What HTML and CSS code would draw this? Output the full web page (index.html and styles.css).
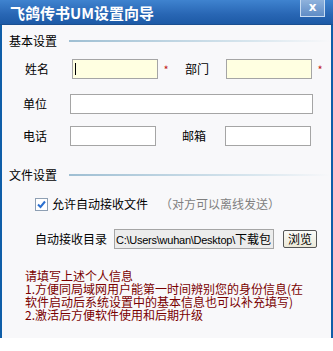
FILE: index.html
```html
<!DOCTYPE html>
<html>
<head>
<meta charset="utf-8">
<link rel="stylesheet" href="styles.css">
</head>
<body>
<div class="window">
  <div class="titlebar">
    <span class="title">飞鸽传书UM设置向导</span>
    <span class="close">x</span>
  </div>
  <div class="body">
    <div class="group-head"><span>基本设置</span><i class="rule"></i></div>
    <div class="row r1">
      <span class="lbl l1">姓名</span>
      <span class="input req w86"><span class="caret"></span></span>
      <span class="star">*</span>
      <span class="lbl l2">部门</span>
      <span class="input req w86"></span>
      <span class="star">*</span>
    </div>
    <div class="row r2">
      <span class="lbl l3">单位</span>
      <span class="input w243"></span>
    </div>
    <div class="row r3">
      <span class="lbl l3">电话</span>
      <span class="input w86"></span>
      <span class="lbl l4">邮箱</span>
      <span class="input w86"></span>
    </div>
    <div class="group-head g2"><span>文件设置</span><i class="rule"></i></div>
    <div class="row r4">
      <span class="check"><svg width="9" height="9" viewBox="0 0 9 9"><path d="M1 4.5 L3.5 7 L8 1.5" fill="none" stroke="#2a6fd0" stroke-width="2"/></svg></span>
      <span class="cklbl">允许自动接收文件</span>
      <span class="hint">（对方可以离线发送）</span>
    </div>
    <div class="row r5">
      <span class="lbl l5">自动接收目录</span>
      <span class="path"><span class="lat">C:\Users\wuhan\Desktop\</span>下载包</span>
      <span class="btn">浏览</span>
    </div>
    <div class="note">
      <div class="ln">请填写上述个人信息</div>
      <div class="ln">1.方便同局域网用户能第一时间辨别您的身份信息(在</div>
      <div class="ln">软件启动后系统设置中的基本信息也可以补充填写)</div>
      <div class="ln">2.激活后方便软件使用和后期升级</div>
    </div>
  </div>
</div>
</body>
</html>
```
FILE: styles.css
```css
html, body { margin: 0; padding: 0; background: #fff; }
body { width: 333px; height: 351px; overflow: hidden; font-family: "Noto Sans CJK SC", "DejaVu Sans", sans-serif; font-size: 12px; color: #000; }
.window { width: 333px; height: 338px; box-sizing: border-box; border-left: 2px solid #0f5ea8; border-right: 2px solid #0f5ea8; background: #f8f8fa; display: flex; flex-direction: column; }
.titlebar { height: 25px; margin: 0 -2px; background: linear-gradient(#3f83cf, #2866b4 60%, #1d5aa6); display: flex; align-items: center; position: relative; border-bottom: 1px solid #1b4f90; box-sizing: border-box; }
.title { color: #fff; font-weight: bold; font-size: 15px; margin-left: 10px; line-height: 1; }
.close { position: absolute; right: 8px; top: 0; width: 25px; height: 17px; background: linear-gradient(#8fb2dc, #5f8cc6); border: 1px solid #c8dcf2; border-top: none; box-sizing: border-box; color: #fff; font-family: "DejaVu Sans", sans-serif; font-weight: bold; font-size: 12px; line-height: 15px; text-align: center; }
.body { flex: 1; position: relative; }
.group-head { display: flex; align-items: center; height: 16px; margin-top: 8px; padding-left: 7px; }
.group-head span { line-height: 16px; }
.rule { flex: 1; height: 2px; margin-left: 12px; background: linear-gradient(to right, #9fbfd3, #d8e6ee 70%, #f8f8fa); }
.g2 { margin-top: 21px; }
.row { display: flex; align-items: center; }
.r1 { margin-top: 10px; height: 20px; }
.r2 { margin-top: 15px; height: 20px; }
.r3 { margin-top: 12px; height: 20px; }
.r4 { margin-top: 14px; height: 14px; }
.r5 { margin-top: 18px; height: 20px; }
.lbl { line-height: 16px; }
.l1 { margin-left: 23px; width: 47px; }
.l2 { margin-left: 11px; width: 41px; }
.l3 { margin-left: 21px; width: 47px; }
.l4 { margin-left: 26px; width: 43px; }
.l5 { margin-left: 33px; width: 79px; }
.input { height: 20px; box-sizing: border-box; border: 1px solid #a5a5a5; background: #fff; position: relative; }
.req { background: #ffffe1; }
.w86 { width: 86px; }
.w243 { width: 243px; }
.caret { position: absolute; left: 2px; top: 3px; width: 1px; height: 12px; background: #000; }
.star { color: #c01818; font-size: 11px; width: 16px; text-align: center; line-height: 12px; }
.check { margin-left: 33px; width: 13px; height: 13px; box-sizing: border-box; border: 1px solid #8e9fb3; background: #fff; display: flex; align-items: center; justify-content: center; }
.cklbl { margin-left: 4px; line-height: 16px; }
.hint { margin-left: 12px; color: #7f7f7f; line-height: 16px; }
.path { width: 160px; height: 20px; box-sizing: border-box; border: 1px solid #a5a5a5; background: #ececec; font-size: 12px; line-height: 18px; white-space: nowrap; overflow: hidden; padding-left: 1px; }
.lat { font-family: "Liberation Sans", sans-serif; font-size: 11px; letter-spacing: -0.25px; }
.btn { margin-left: 9px; width: 34px; height: 18px; box-sizing: border-box; border: 1px solid #555; border-radius: 2px; background: linear-gradient(#fbfbf8, #ece9d8); line-height: 16px; text-align: center; }
.note { margin-top: 20px; margin-left: 23px; color: #7a0000; line-height: 13px; }
.ln { height: 13px; }
```
